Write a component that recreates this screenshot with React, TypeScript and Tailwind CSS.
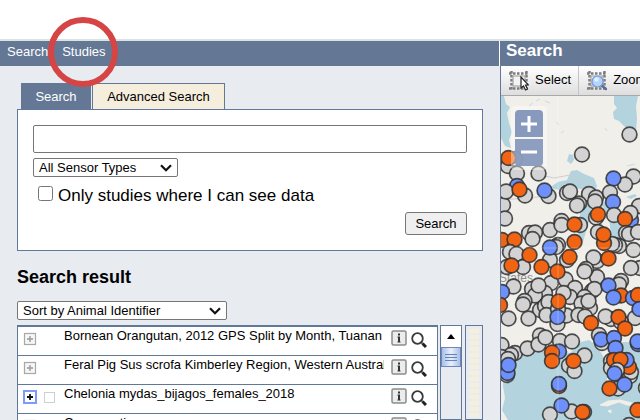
import type { ReactNode } from 'react';

type Kind = 'g' | 'o' | 'b';
type Pin = [Kind, number, number];

const fills: Record<Kind, string> = { g: '#d3d3d3', o: '#f06414', b: '#6e90fb' };

const pins: Pin[] = [
  ['g', 629.5, 134.5], ['g', 582, 154.5], ['g', 508, 166], ['g', 515, 159], ['o', 508.5, 158],
  ['g', 517, 173.5], ['g', 538.5, 173.5], ['g', 633.5, 176.5], ['g', 625, 184.5], ['b', 613.5, 178.5],
  ['b', 517, 186], ['g', 503, 205], ['g', 506, 191.5], ['g', 525, 195.5], ['o', 519.5, 189.5],
  ['g', 548.5, 196], ['b', 544.5, 190.5], ['g', 567, 193], ['g', 570, 191.5], ['g', 589, 194],
  ['g', 579, 203.5], ['g', 577, 205.5], ['g', 596, 197.5], ['g', 595, 201.5], ['g', 610, 192.5],
  ['b', 613, 202], ['g', 639, 206], ['g', 614, 215], ['b', 631, 220], ['g', 630.5, 213],
  ['o', 625, 219], ['g', 596, 217.5], ['o', 598, 214.5], ['g', 505, 218.5], ['g', 550, 230],
  ['g', 561.5, 221], ['g', 561.5, 225], ['g', 580, 225], ['o', 574.5, 224.5], ['o', 574.5, 242],
  ['o', 502, 240], ['o', 514.5, 239.5], ['g', 529, 233], ['g', 535, 232.5], ['g', 532.5, 239],
  ['g', 558, 245], ['g', 556, 247], ['g', 550, 260], ['b', 550, 247.5], ['g', 598, 232],
  ['g', 619, 246], ['g', 615, 245], ['g', 612, 244], ['o', 604, 243], ['o', 603.5, 234.5],
  ['g', 626, 233], ['g', 629, 234], ['g', 638, 232], ['g', 633.5, 250], ['g', 510, 252],
  ['g', 516.5, 254], ['g', 523, 267], ['o', 529.5, 255], ['g', 507, 267], ['o', 511.5, 265.5],
  ['o', 541.5, 267], ['g', 567, 260], ['o', 569.5, 257], ['g', 551, 283], ['g', 565.5, 279.5],
  ['o', 557.5, 271.5], ['g', 597, 261], ['g', 593.5, 257.5], ['o', 608.5, 258.5], ['g', 597, 277],
  ['g', 586, 269], ['g', 584.5, 271.5], ['g', 640, 268], ['g', 631, 268], ['g', 532, 289],
  ['g', 545, 293], ['g', 535, 295.5], ['g', 538.5, 285.5], ['g', 513.5, 286.5], ['b', 502, 292],
  ['g', 575, 288], ['g', 592, 291], ['g', 594.5, 289], ['g', 621, 281], ['g', 619, 284.5],
  ['b', 608.5, 285.5], ['o', 621, 295.5], ['b', 613.5, 297.5], ['b', 633, 298], ['o', 638, 295],
  ['o', 500, 305], ['g', 524.5, 301], ['g', 523, 304.5], ['g', 570, 297], ['g', 563.5, 293],
  ['g', 540, 310], ['g', 545, 306], ['g', 548.5, 302], ['g', 546.5, 315], ['g', 557.5, 324],
  ['g', 566.5, 315.5], ['g', 558, 309], ['o', 558.5, 301.5], ['b', 557.5, 317], ['g', 584.5, 297],
  ['g', 581.5, 303.5], ['g', 590, 308], ['g', 588.5, 301], ['g', 508.5, 318.5], ['g', 528.5, 318.5],
  ['g', 578.5, 315], ['g', 585, 316.5], ['o', 591, 323], ['g', 611, 319], ['g', 605.5, 316.5],
  ['g', 635, 318], ['b', 639.5, 309], ['g', 621, 322], ['o', 618.5, 317], ['o', 625, 328.5],
  ['g', 599, 335], ['g', 602, 343], ['b', 601, 339.5], ['b', 614, 338], ['b', 615.5, 348],
  ['b', 638, 344], ['b', 637.5, 341.5], ['g', 501.5, 345], ['g', 515, 353], ['g', 511, 355],
  ['g', 501.5, 357], ['g', 527.5, 348.5], ['g', 540, 335.5], ['g', 538.5, 344.5], ['g', 545.5, 337.5],
  ['g', 560, 341], ['g', 572, 341.5], ['g', 508, 359], ['g', 507, 375], ['b', 507.5, 373],
  ['b', 508.5, 365], ['b', 559, 351.5], ['o', 552, 352.5], ['o', 552, 361], ['g', 584.5, 355.5],
  ['g', 569, 365.5], ['g', 574.5, 371], ['o', 573.5, 361], ['g', 611, 361], ['g', 611, 368],
  ['o', 614, 360], ['g', 630, 376], ['g', 631, 372], ['o', 629, 367], ['b', 626.5, 360],
  ['o', 620.5, 359.5], ['g', 617, 370], ['b', 614.5, 373.5], ['g', 618, 388.5], ['b', 624.5, 384.5],
  ['o', 609.5, 388.5], ['g', 646, 388], ['o', 559, 386], ['b', 559, 384], ['g', 550, 414.5],
  ['g', 571.5, 411.5], ['b', 561.5, 405.5], ['g', 584, 412], ['o', 582.5, 412], ['o', 637.5, 410],
  ['g', 629, 425],
];

const studies = [
  { name: 'Bornean Orangutan, 2012 GPS Split by Month, Tuanan', open: false },
  { name: 'Feral Pig Sus scrofa Kimberley Region, Western Australia', open: false },
  { name: 'Chelonia mydas_bijagos_females_2018', open: true },
  { name: 'Conservation', open: false },
];

function StudyMap() {
  return (
    <svg className="block h-full w-full" viewBox="501 96 139 324" preserveAspectRatio="xMinYMin slice" role="img" aria-label="Map of study locations">
      <rect x="501" y="96" width="600" height="600" fill="#f1efea" />
      <g fill="#b3d3de">
        <path d="M501 96h3l2 8 4 3-3 6 2 10 3 9-3 8 2 8-6-2-4-8z" />
        <path d="M614 96h24l-2 10 1 12-1 14-4-2-7-3-6-6-5-2-1-7 4-4-3-4z" />
        <path d="M569 154l4 1 1 5-3 4-4-3z" />
        <path d="M549 188l9-6 9-2 4-9 6-1 7 4 10 4 3 8-3 9-10-5-12-3-12 3z" />
        <path d="M584 196l8 2-2 20-7 24-5-4 2-24z" />
        <path d="M600 202l17 0 5 22-3 16-8-5-2-18z" />
        <path d="M626 197l9-3 2 2-6 3zM622 212l8-3 6 8-7 4z" />
        <path d="M504 370l6-14 14-5 16-6 16 5 14 3 11-11 8-2 8 6 6 10 4 12 0 20 6 5 5-3-3-14 2-30 6-4h17v80H509l-7-12 3-12-2-12z" />
        <path d="M529 106l4-3M545 101l5 2M561 133l3-2M605 128l2 3M556 122l3 3M536 101l4-2M627 166l8-2" stroke="#c5dde4" />
      </g>
      <path d="M600 405l8-4 12-1 12 3 8 3-13-1-8-3-12 4zM608 411l3-1 0 3z" fill="#f1efea" stroke="#f1efea" />
      <path d="M540 175l14 3 16-3 18 8 8 8M501 200l50-4" fill="none" stroke="#d0cccb" />
      <text x="499" y="282" fontSize="12" fill="#8d8d8d" fontFamily="Liberation Sans">States</text>
      {pins.map(([kind, x, y], i) => (
        <circle key={i} cx={x} cy={y} r="7.4" fill={fills[kind]} stroke="#303030" strokeOpacity="0.85" strokeWidth="1.7" />
      ))}
      <path d="M558 96v324M501 248h139" stroke="#fff" strokeOpacity="0.25" />
    </svg>
  );
}

function Chevron() {
  return (
    <svg className="pointer-events-none absolute top-1/2 right-1.5 h-2 w-3 -translate-y-1/2" viewBox="0 0 12 8" aria-hidden="true">
      <path d="M1 1.2l5 5 5-5" fill="none" stroke="#111" strokeWidth="2.200" />
    </svg>
  );
}

function Dropdown({ label, value, className }: { label: string; value: string; className: string }) {
  return (
    <div className={`relative ${className}`}>
      <select aria-label={label} className="block h-[19px] w-full appearance-none rounded-[2px] border border-[#767676] bg-white pl-[5px] text-[13px] leading-4 text-black">
        <option>{value}</option>
      </select>
      <Chevron />
    </div>
  );
}

function Marquee({ children }: { children: ReactNode }) {
  return (
    <svg className="h-5 w-5 shrink-0" viewBox="0 0 20 20" aria-hidden="true">
      <path d="M0 2.500h20M0 17.500h20M2.500 0v20M17.500 0v20" fill="none" stroke="#7d7d7d" strokeWidth="2.500" strokeDasharray="2.500 1.500" />
      <rect x="4" y="5" width="12" height="10" fill="#f3f3f3" stroke="#999" />
      {children}
    </svg>
  );
}

function SelectIcon() {
  return (
    <Marquee>
      <path d="M12 6v11l2.500-2 2 4 2-1-2-4h3z" fill="#fff" stroke="#222" strokeWidth="1.200" />
    </Marquee>
  );
}

function ZoomIcon() {
  return (
    <Marquee>
      <path d="M14 14l5 4" stroke="#5a6f95" strokeWidth="2.500" strokeLinecap="round" />
      <circle cx="10.500" cy="10.500" r="5.500" fill="#b5d3fb" stroke="#6f97dd" strokeWidth="1.200" />
      <circle cx="9.500" cy="8.500" r="2.200" fill="#e3f0ff" />
    </Marquee>
  );
}

function PlusIcon({ active }: { active: boolean }) {
  return (
    <svg className="h-3.5 w-3.5" viewBox="0 0 14 14" aria-hidden="true">
      {active ? (
        <rect x="1" y="1" width="12" height="12" fill="#fff" stroke="#7d9bfa" strokeWidth="2" />
      ) : (
        <rect x="1.500" y="1.500" width="11" height="11" fill="#f6f6f6" stroke="#a8a8a8" strokeWidth="1.200" />
      )}
      <path d="M4 7h6M7 4v6" stroke={active ? '#111' : '#999'} strokeWidth={active ? 1.8 : 1.4} />
    </svg>
  );
}

function InfoIcon() {
  return (
    <svg className="h-4 w-4" viewBox="0 0 16 16" aria-hidden="true">
      <rect x="1" y="1" width="14" height="14" rx="1.500" fill="#ececec" stroke="#8c8c8c" strokeWidth="1.500" />
      <path d="M7 3.500h2v2H7zM6.500 6.500H9v5h.500v1h-3v-1H7v-4h-.500z" fill="#333" />
    </svg>
  );
}

function MagnifierIcon() {
  return (
    <svg className="h-4 w-4" viewBox="0 0 16 16" aria-hidden="true">
      <circle cx="6.500" cy="6.500" r="5.300" fill="#fff" stroke="#3a3a3a" strokeWidth="1.800" />
      <path d="M10 10l1.500 1.500" stroke="#333" strokeWidth="1.500" />
      <path d="M11.500 11.500l3.500 3.500" stroke="#222" strokeWidth="3" />
    </svg>
  );
}

function SearchForm() {
  return (
    <section className="mx-[17px] mt-[17px]">
      <div role="tablist" className="flex gap-px pl-1 text-[13px] leading-[15px]">
        <button role="tab" aria-selected="true" className="h-[26px] w-[70px] bg-[#647896] text-white">Search</button>
        <button role="tab" aria-selected="false" className="h-[26px] w-[133px] border border-b-0 border-[#647896] bg-[#f5eedc] text-black">Advanced Search</button>
      </div>
      <form className="flex flex-col border border-[#5f78a0] bg-white px-[15px] pt-[15px] pb-[15px]">
        <input type="text" aria-label="Search studies" className="h-7 w-full rounded-[2px] border border-[#767676] px-1 text-base" />
        <Dropdown label="Sensor type" value="All Sensor Types" className="mt-[5px] w-[145px]" />
        <label className="mt-2.5 flex items-center gap-[5px] pl-[5px] text-[17px] leading-[18px]">
          <input type="checkbox" className="-mt-1.5 h-[15px] w-[15px]" />
          Only studies where I can see data
        </label>
        <button type="button" className="mt-[7px] h-[23px] w-[62px] self-end rounded-[3px] border border-[#767676] bg-[#efefef] text-[13px] leading-4">Search</button>
      </form>
    </section>
  );
}

function Results() {
  return (
    <section className="mx-[17px] mt-4 flex min-h-0 flex-1 flex-col">
      <h2 className="text-lg leading-5 font-bold">Search result</h2>
      <Dropdown label="Sort by" value="Sort by Animal Identifier" className="mt-3.5 w-[210px]" />
      <div className="mt-[5px] flex min-h-0 flex-1 items-stretch">
        <ul className="min-w-0 flex-1 overflow-hidden border-x border-t-2 border-[#5f7899] bg-white">
          {studies.map((study) => (
            <li key={study.name} className="flex h-[29px] items-start border-b border-[#5f7899] pl-[5px]">
              <button aria-label="Expand" className="mt-[5px] shrink-0"><PlusIcon active={study.open} /></button>
              <span className="mt-[7px] ml-[7px] w-5 shrink-0">
                {study.open && <input type="checkbox" aria-label={study.name} className="block h-[11px] w-[11px] appearance-none border border-[#cfcfcf] bg-white" />}
              </span>
              <span className="min-w-0 flex-1 overflow-hidden text-[13px] leading-[18px] whitespace-nowrap">{study.name}</span>
              <button aria-label="Details" className="mt-[3px] ml-[7px] shrink-0"><InfoIcon /></button>
              <button aria-label="Show on map" className="mt-[5px] mr-2.5 ml-1 shrink-0"><MagnifierIcon /></button>
            </li>
          ))}
        </ul>
        <div className="ml-0.5 w-[22px] shrink-0 border border-[#5f7899]">
          <button aria-label="Scroll up" className="flex h-[21px] w-full items-center justify-center bg-white">
            <svg className="h-1.5 w-2" viewBox="0 0 8 6" aria-hidden="true"><path d="M0 5l4-5 4 5z" fill="#000" /></svg>
          </button>
          <div className="flex h-5 flex-col items-center justify-center gap-0.5 border border-[#6f87bf] bg-linear-to-r from-[#a9bfe6] via-[#e8f0fb] to-[#a9bfe6]">
            <span className="h-px w-3 bg-[#6484c0]" />
            <span className="h-px w-3 bg-[#6484c0]" />
            <span className="h-px w-3 bg-[#6484c0]" />
          </div>
        </div>
        <div className="ml-[3px] w-[18px] shrink-0 border border-[#5f7899] px-[3px] pt-[3px]">
          <div className="h-full bg-[repeating-linear-gradient(to_bottom,#f5efdb_0px,#f5efdb_4px,transparent_4px,transparent_6px)]" />
        </div>
      </div>
    </section>
  );
}

export default function App() {
  return (
    <div className="relative flex h-screen flex-col overflow-hidden bg-white pt-[39px] font-['Liberation_Sans',Arial,sans-serif] text-black">
      <div className="h-0.5 shrink-0 bg-[#dce4e2]" />
      <div className="flex min-h-0 flex-1">
        <div className="flex w-[500px] shrink-0 flex-col bg-[#e8ebf0]">
          <nav className="flex h-[25px] shrink-0 gap-3.5 border-r border-white bg-[#647896] pt-[3px] pl-[7px] text-[13px] leading-4 text-white">
            <a href="#search">Search</a>
            <a href="#studies">Studies</a>
          </nav>
          <SearchForm />
          <Results />
        </div>
        <main className="flex min-w-0 flex-1 flex-col border-l border-[#647896]">
          <h1 className="h-[25px] shrink-0 bg-[#647896] pl-[5px] text-[17px] leading-[19px] font-bold text-white">Search</h1>
          <div className="flex h-[30px] shrink-0 items-center overflow-hidden border-b border-[#a8a8a8] bg-linear-to-b from-white to-[#dedede] text-[13px] leading-4">
            <button className="flex h-full shrink-0 items-center gap-1.5 border-r border-[#c4c4c4] pr-[7px] pl-2">
              <SelectIcon />
              <span className="pb-0.5">Select</span>
            </button>
            <button className="flex h-full shrink-0 items-center gap-1.5 pl-2">
              <ZoomIcon />
              <span className="pb-0.5">Zoom</span>
            </button>
          </div>
          <div className="relative min-h-0 flex-1">
            <StudyMap />
            <div className="absolute top-2.5 left-2.5 flex flex-col gap-0.5 rounded bg-white/40 p-1">
              <button aria-label="Zoom in" className="flex h-[27px] w-7 items-center justify-center rounded-t-sm bg-[#8799bd]">
                <svg className="h-4 w-4" viewBox="0 0 16 16" aria-hidden="true"><path d="M0 8h16M8 0v16" stroke="#fff" strokeWidth="3" /></svg>
              </button>
              <button aria-label="Zoom out" className="flex h-[27px] w-7 items-center justify-center rounded-b-sm bg-[#8799bd]/95">
                <svg className="h-4 w-4" viewBox="0 0 16 16" aria-hidden="true"><path d="M0 7h16" stroke="#fff" strokeWidth="3" /></svg>
              </button>
            </div>
          </div>
        </main>
      </div>
      <div className="pointer-events-none absolute top-[17px] left-12 h-[70px] w-[70px] rounded-full border-[6px] border-[#d64545]" />
    </div>
  );
}
